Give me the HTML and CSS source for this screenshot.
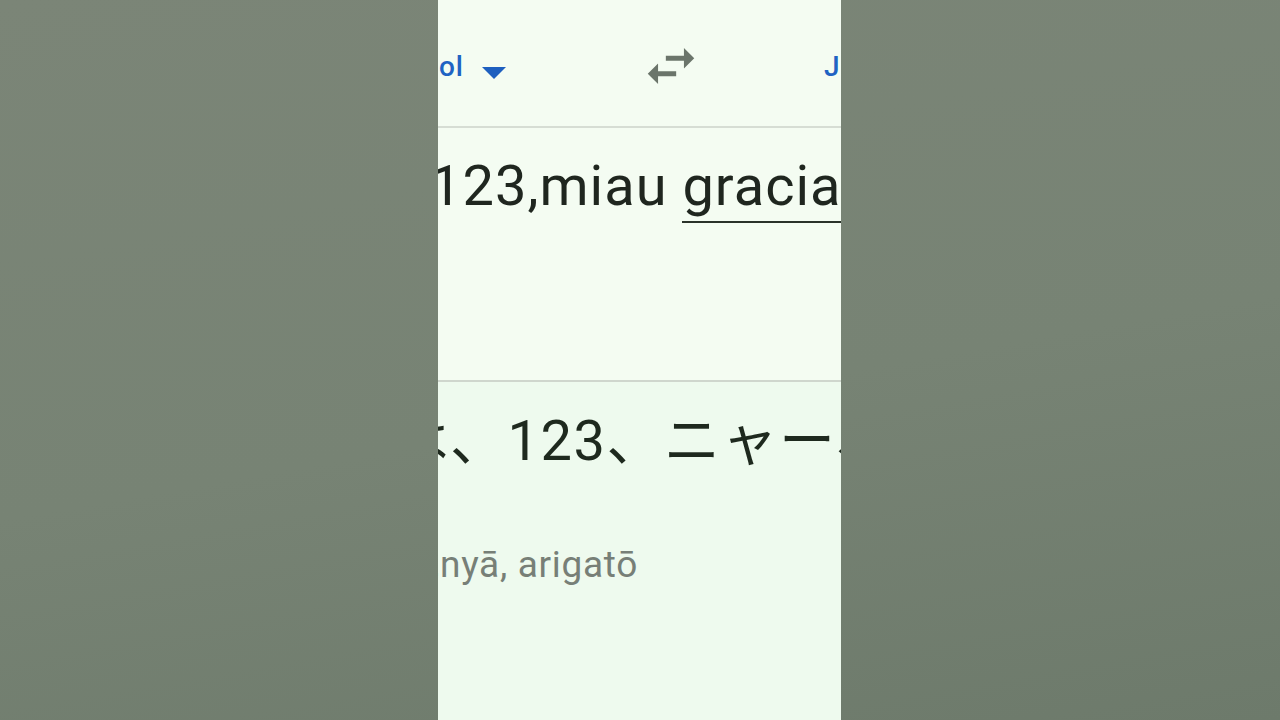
FILE: index.html
```html
<!DOCTYPE html>
<html lang="es">
<head>
<meta charset="utf-8">
<title>Traductor</title>
<link rel="stylesheet" href="styles.css">
</head>
<body>
<div class="stage">
  <main class="panel">
    <header class="langbar">
      <div class="lang-src">
        <span class="lang-name">Español</span>
        <svg class="caret" width="24" height="12" viewBox="0 0 24 12"><polygon points="0,0 24,0 12,12" fill="#1d5fbf"/></svg>
      </div>
      <svg class="swap" width="62" height="62" viewBox="0 0 24 24"><path d="M6.99 11L3 15l3.99 4v-3H14v-2H6.99v-3zM21 9l-3.99-4v3H10v2h7.01v3L21 9z" fill="#6b756b"/></svg>
      <div class="lang-tgt"><span class="lang-name">Japonés</span></div>
    </header>
    <section class="source">
      <div class="line src-line">
        <span class="pre"><span>Hola, </span></span><span>123,miau <span class="spell">gracias</span></span>
      </div>
    </section>
    <section class="target">
      <div class="line tgt-line">
        <span class="pre"><span>こんにちは</span></span><span>、123、ニャー、ありがとう</span>
      </div>
      <div class="line rom-line">
        <span class="pre"><span>Konnichiwa, 123, </span></span><span>nyā, arigatō</span>
      </div>
    </section>
  </main>
</div>
</body>
</html>
```
FILE: styles.css
```css
html, body {
  margin: 0;
  padding: 0;
  height: 100%;
}
body {
  background: linear-gradient(170deg, #7b8577 0%, #778374 55%, #6d7a6b 100%);
  font-family: Roboto, "Noto Sans CJK JP", sans-serif;
}
.stage {
  height: 720px;
  display: grid;
  grid-template-columns: 438px 403px 1fr;
}
.panel {
  grid-column: 2;
  width: 403px;
  height: 720px;
  overflow: hidden;
  background: #eefaee;
  display: flex;
  flex-direction: column;
}
.langbar {
  height: 126px;
  flex: none;
  display: flex;
  align-items: flex-start;
  border-bottom: 2px solid #d6ddd4;
  background: #f4fcf2;
}
.lang-src {
  width: 68px;
  flex: none;
  display: flex;
  justify-content: flex-end;
  align-items: flex-start;
  gap: 18px;
  margin-top: 51px;
  white-space: nowrap;
}
.lang-name {
  font-size: 28px;
  line-height: 32px;
  font-weight: 500;
  color: #1f63c3;
  letter-spacing: 1px;
  white-space: nowrap;
}
.caret {
  flex: none;
  margin-top: 16px;
}
.swap {
  flex: none;
  margin-left: 134px;
  margin-top: 35px;
}
.lang-tgt {
  margin-left: 122px;
  margin-top: 51px;
  white-space: nowrap;
}
.source {
  height: 254px;
  flex: none;
  box-sizing: border-box;
  padding-top: 25px;
  border-bottom: 2px solid #cfd6cd;
  background: #f4fcf2;
}
.target {
  flex: 1;
  padding-top: 26px;
}
.line {
  display: flex;
  white-space: nowrap;
}
.pre {
  width: 0;
  flex: none;
  display: flex;
  justify-content: flex-end;
}
.src-line {
  font-size: 56px;
  line-height: 66px;
  color: #1f261f;
  letter-spacing: 1px;
}
.src-line .pre { margin-left: -8px; }
.spell {
  display: inline-block;
  line-height: 60px;
  padding-bottom: 5px;
  margin-bottom: -4px;
  border-bottom: 2px solid #2a332a;
}
.tgt-line {
  font-size: 56px;
  line-height: 66px;
  color: #1e291e;
  letter-spacing: 1.5px;
}
.tgt-line .pre { margin-left: 12px; }
.rom-line {
  margin-top: 70px;
  font-size: 37px;
  line-height: 42px;
  color: #777f77;
  letter-spacing: 0.7px;
}
.rom-line .pre { margin-left: 2px; }
```
